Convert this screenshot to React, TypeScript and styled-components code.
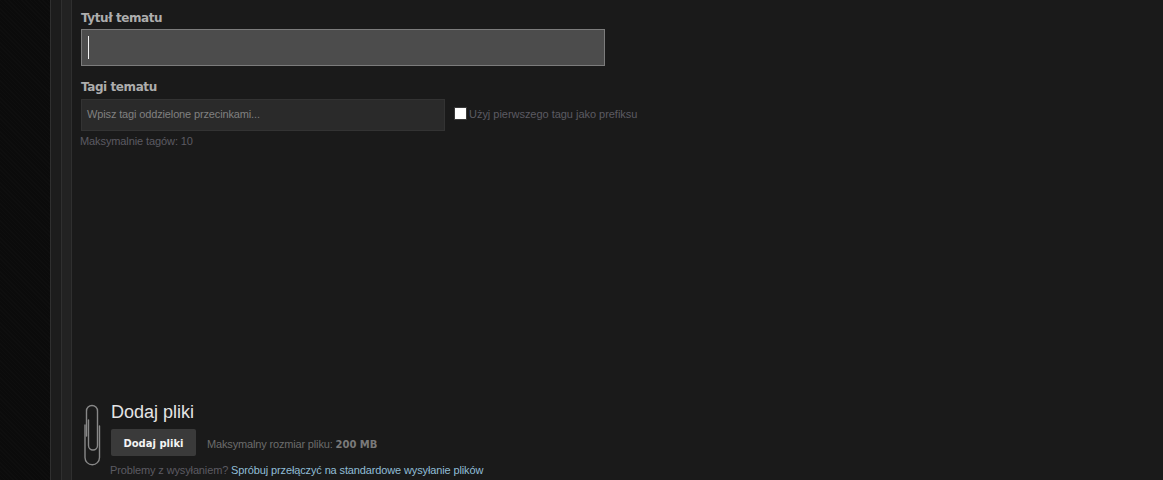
import React from 'react';
import styled, { createGlobalStyle } from 'styled-components';

const GlobalStyle = createGlobalStyle`
  html, body {
    margin: 0;
    padding: 0;
    background: #0b0b0b;
  }
`;

const Page = styled.div`
  display: flex;
  width: 1163px;
  height: 480px;
  overflow: hidden;
  font-family: "Liberation Sans", Arial, sans-serif;
`;

const Backdrop = styled.div`
  width: 50px;
  flex: none;
  background-color: #0b0b0b;
  background-image: repeating-linear-gradient(45deg, #0e0e0e 0 1px, transparent 1px 3px);
`;

const Strip = styled.div<{ $width: number; $tone: string }>`
  box-sizing: border-box;
  width: ${(props) => props.$width}px;
  flex: none;
  background: ${(props) => props.$tone};
  border-left: 1px solid #2f2f2f;
`;

const Main = styled.main`
  flex: 1;
  display: flex;
  flex-direction: column;
  padding: 12px 0 0 9px;
  background: #1a1a1a;
  border-left: 1px solid #2f2f2f;
`;

const Label = styled.label`
  display: block;
  height: 13px;
  font-family: "DejaVu Sans", sans-serif;
  font-size: 12px;
  line-height: 13px;
  font-weight: 700;
  letter-spacing: -0.42px;
  color: #adadad;
`;

const TitleBox = styled.div`
  display: flex;
  align-items: center;
  box-sizing: border-box;
  width: 524px;
  height: 37px;
  margin: 4px 0 15px;
  padding-left: 6px;
  background: #4c4c4c;
  border: 1px solid #7c7c7c;
`;

const Caret = styled.span`
  width: 1px;
  height: 23px;
  background: #f2f2f2;
`;

const TagRow = styled.div`
  display: flex;
  align-items: center;
  margin-top: 5px;
`;

const TagInput = styled.div`
  display: flex;
  align-items: center;
  box-sizing: border-box;
  width: 364px;
  height: 32px;
  padding: 0 0 2px 5px;
  background: #2a2a2a;
  border: 1px solid #333333;
  font-size: 11px;
  letter-spacing: -0.14px;
  color: #808080;
`;

const Check = styled.span`
  box-sizing: border-box;
  width: 13px;
  height: 13px;
  margin: 0 2px 3px 9px;
  background: #ffffff;
  border: 1px solid #3a3a3a;
`;

const Hint = styled.span`
  padding-bottom: 2px;
  font-size: 11px;
  letter-spacing: -0.03px;
  color: #5c5b62;
`;

const MaxTags = styled(Hint)`
  display: block;
  margin: 4px 0 0 -1px;
  padding: 0;
  line-height: 13px;
  letter-spacing: -0.1px;
`;

const Uploader = styled.section`
  display: flex;
  margin-top: auto;
  padding-bottom: 4px;
`;

const Clip = styled.svg`
  flex: none;
  width: 17px;
  height: 62px;
  margin: 2px 10px 0 3px;
`;

const UploadBody = styled.div`
  display: flex;
  flex-direction: column;
`;

const Heading = styled.h3`
  margin: 0;
  font-size: 18px;
  line-height: 20px;
  font-weight: 400;
  color: #e4e4e4;
`;

const UploadRow = styled.div`
  display: flex;
  align-items: center;
  margin-top: 7px;
`;

const AddButton = styled.button`
  box-sizing: border-box;
  width: 85px;
  height: 27px;
  padding: 2px 0 0;
  border: 0;
  border-radius: 2px;
  background: #3a3a3a;
  font-family: "DejaVu Sans", sans-serif;
  font-size: 10px;
  font-weight: 700;
  color: #f4f4f4;
`;

const SizeNote = styled.span`
  margin-left: 11px;
  padding-top: 2px;
  font-size: 11px;
  letter-spacing: -0.16px;
  color: #6c6c6c;

  strong {
    font-family: "DejaVu Sans", sans-serif;
    font-size: 10px;
    letter-spacing: 0;
    color: #7a7a7a;
  }
`;

const Trouble = styled.p`
  margin: 8px 0 0 -1px;
  font-size: 11px;
  line-height: 12px;
  letter-spacing: -0.13px;
  color: #5c5b62;

  a {
    color: #90bdd6;
    text-decoration: none;
  }
`;

export default function App() {
  return (
    <>
      <GlobalStyle />
      <Page>
        <Backdrop />
        <Strip $width={11} $tone="#1c1c1c" />
        <Strip $width={10} $tone="#222222" />
        <Main>
          <Label>Tytuł tematu</Label>
          <TitleBox>
            <Caret />
          </TitleBox>
          <Label>Tagi tematu</Label>
          <TagRow>
            <TagInput>Wpisz tagi oddzielone przecinkami...</TagInput>
            <Check />
            <Hint>Użyj pierwszego tagu jako prefiksu</Hint>
          </TagRow>
          <MaxTags>Maksymalnie tagów: 10</MaxTags>
          <Uploader>
            <Clip viewBox="0 0 17 62" fill="none" stroke="#888888" strokeWidth="1.4" strokeLinecap="round">
              <path d="M15.5 22V53.5a7.25 7.25 0 0 1-14.5 0V21" />
              <path d="M2.5 32V7a5.5 5.5 0 0 1 11 0V41.5a4.5 4.5 0 0 1-9 0V16" />
            </Clip>
            <UploadBody>
              <Heading>Dodaj pliki</Heading>
              <UploadRow>
                <AddButton>Dodaj pliki</AddButton>
                <SizeNote>
                  Maksymalny rozmiar pliku: <strong>200 MB</strong>
                </SizeNote>
              </UploadRow>
              <Trouble>
                Problemy z wysyłaniem? <a href="#">Spróbuj przełączyć na standardowe wysyłanie plików</a>
              </Trouble>
            </UploadBody>
          </Uploader>
        </Main>
      </Page>
    </>
  );
}
